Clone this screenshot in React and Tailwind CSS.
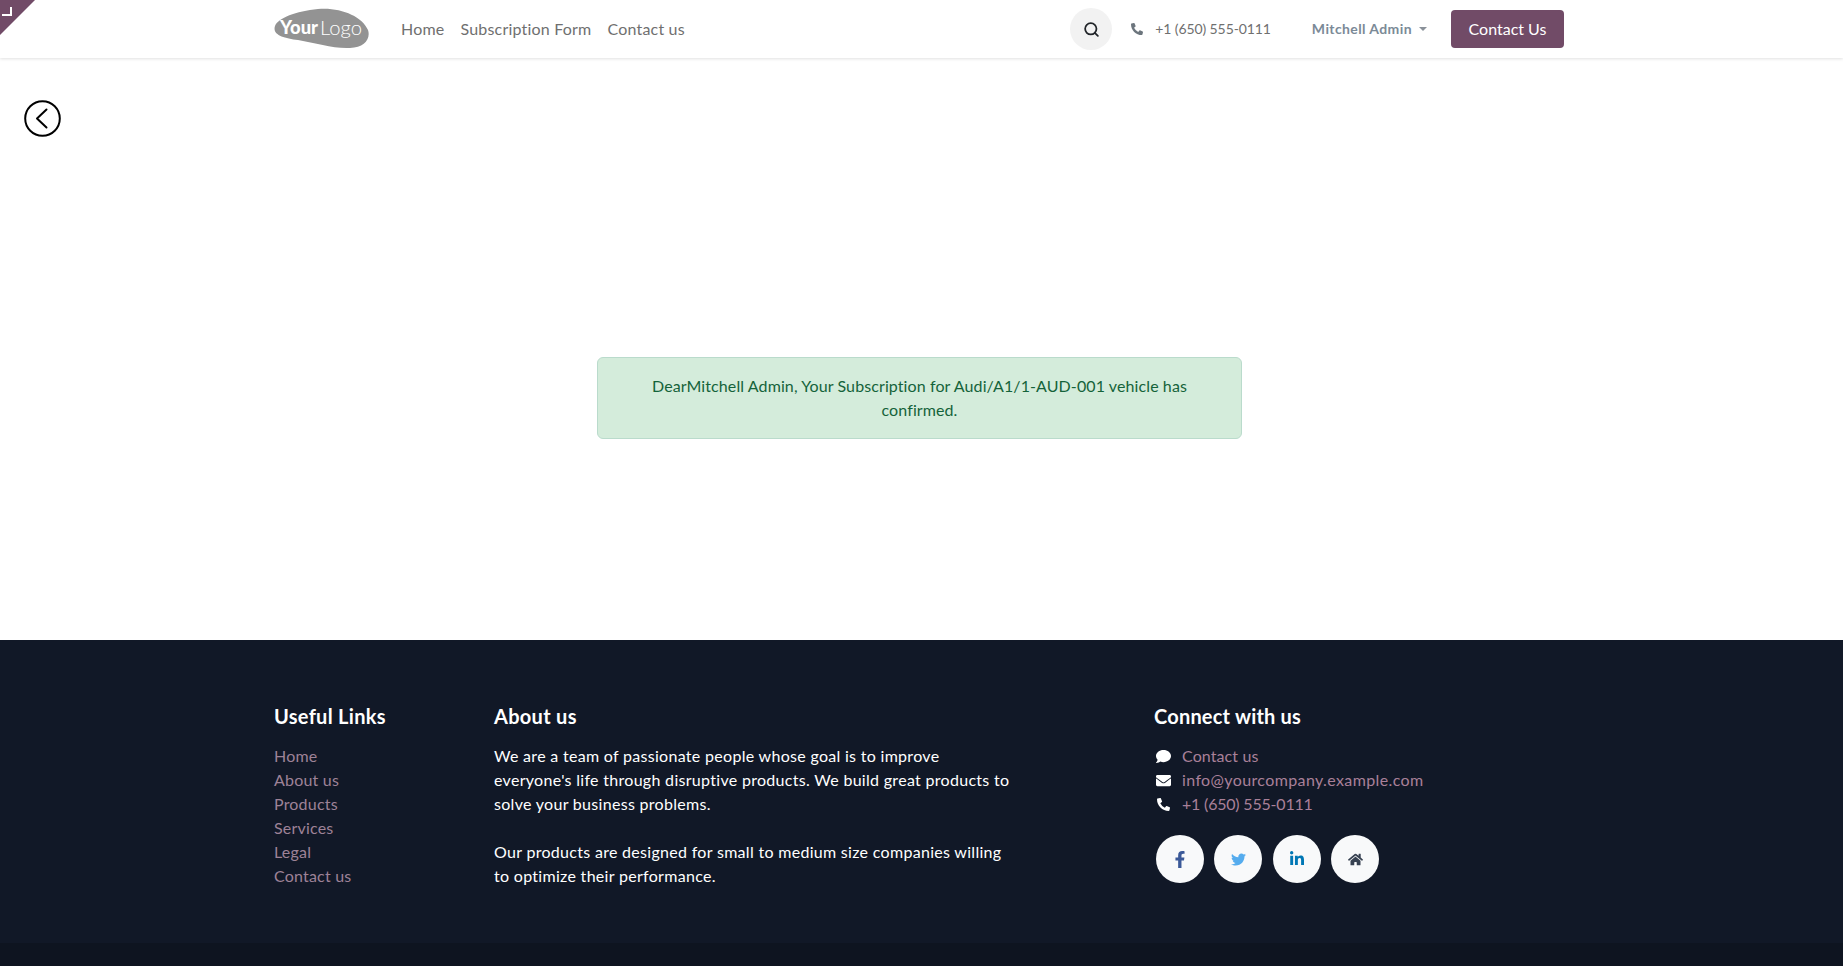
import React from 'react';
import { FaFacebookF, FaTwitter, FaLinkedinIn, FaHome, FaComment, FaEnvelope, FaPhoneAlt } from 'react-icons/fa';
import { Search } from 'lucide-react';

const usefulLinks = ['Home', 'About us', 'Products', 'Services', 'Legal', 'Contact us'];

const contacts = [
  { icon: <FaComment className="w-[17px] h-[15px]" />, label: 'Contact us', track: 'tracking-[0.1px]' },
  { icon: <FaEnvelope className="w-[17px] h-[15px]" />, label: 'info@yourcompany.example.com', track: 'tracking-[0.38px]' },
  { icon: <FaPhoneAlt className="w-[13px] h-[13px] ml-[2px]" />, label: '+1 (650) 555-0111', track: 'tracking-[-0.2px]' },
];

const socials = [
  { icon: <FaFacebookF className="w-[14px] h-[17px] text-[#3b5998]" />, key: 'fb' },
  { icon: <FaTwitter className="w-[15px] h-[15px] text-[#55acee]" />, key: 'tw' },
  { icon: <FaLinkedinIn className="w-[16px] h-[16px] text-[#0077b5]" />, key: 'li' },
  { icon: <FaHome className="w-[15px] h-[15px] text-[#374151]" />, key: 'home' },
];

function Logo() {
  return (
    <svg width="96" height="42" viewBox="0 0 96 42" className="block">
      <path
        d="M1 18 C4 10 22 3 44 1 C66 -1 88 8 94 22 C97 31 90 40 76 40 C60 41 42 35 24 32 C10 30 -2 27 1 18 Z"
        fill="#939393"
      />
      <text x="6" y="26" fontSize="18" fontWeight="900" fill="#fff" fontFamily="Lato, sans-serif" textLength="38" lengthAdjust="spacingAndGlyphs">Your</text>
      <text x="46" y="27" fontSize="20" fontWeight="300" fill="#fff" fontFamily="Lato, sans-serif" textLength="42" lengthAdjust="spacingAndGlyphs">Logo</text>
    </svg>
  );
}

export default function App() {
  return (
    <div className="relative flex flex-col h-screen overflow-hidden bg-white font-['Lato',sans-serif] text-base">
      {/* editor corner */}
      <div className="absolute left-0 top-0 w-[35px] h-[35px] bg-[#714B67] [clip-path:polygon(0_0,100%_0,0_100%)] z-20">
        <div className="absolute left-[2px] top-[7px] w-[10px] h-[9px] border-r-2 border-b-2 border-white"></div>
      </div>

      <header className="h-[58px] shrink-0 bg-white shadow-[0_1px_3px_rgba(0,0,0,0.12)] z-10">
        <div className="w-[1295px] h-full mx-auto flex items-center text-[#6b6b6b]">
          <Logo />
          <nav className="flex items-center gap-4 ml-[31px] text-[#6f6f6f] tracking-[0.2px]">
            <span>Home</span>
            <span>Subscription Form</span>
            <span>Contact us</span>
          </nav>
          <div className="flex-1"></div>
          <div className="w-[42px] h-[42px] rounded-full bg-[#f2f2f2] flex items-center justify-center text-[#212529]">
            <Search size={17} strokeWidth={2.5} />
          </div>
          <FaPhoneAlt className="w-[12px] h-[12px] ml-[19px] text-[#6c757d]" />
          <span className="ml-[12px] text-sm text-[#6f6f6f] tracking-[-0.1px]">+1 (650) 555-0111</span>
          <span className="ml-[41px] text-sm font-bold text-[#7b8a97] tracking-[0.4px]">Mitchell Admin</span>
          <span className="ml-[7px] w-0 h-0 border-x-4 border-t-4 border-x-transparent border-t-[#8a9199]"></span>
          <button className="ml-[24px] mr-[5px] w-[113px] h-[38px] bg-[#714B67] rounded text-white">Contact Us</button>
        </div>
      </header>

      <main className="flex-1">
        <div className="ml-6 mt-[42px] w-[37px] h-[37px]">
          <svg width="37" height="37" viewBox="0 0 37 37" fill="none" stroke="#000" strokeWidth="2">
            <circle cx="18.5" cy="18.5" r="17.3" />
            <path d="M22.5 9.5 L13 18.5 L22.5 27.5" strokeLinecap="round" strokeLinejoin="round" />
          </svg>
        </div>
        <div className="w-[645px] h-[82px] mt-[220px] ml-[597px] flex items-center justify-center text-center leading-6 tracking-[0.1px] rounded-md border border-[#badbcc] bg-[#d4ecdb] text-[#14633a]">
          <p>
            DearMitchell Admin, Your Subscription for Audi/A1/1-AUD-001 vehicle has
            <br />
            confirmed.
          </p>
        </div>
      </main>

      <footer className="shrink-0 bg-[#111827] text-white">
        <div className="h-[303px] w-[1295px] mx-auto pt-[64px] flex">
          <div className="w-[220px]">
            <h5 className="text-xl font-bold leading-[24px] mb-[16px] tracking-[0.3px]">Useful Links</h5>
            <ul className="leading-6 text-[#9e8297] tracking-[0.2px]">
              {usefulLinks.map((link) => (
                <li key={link}>{link}</li>
              ))}
            </ul>
          </div>
          <div className="w-[660px]">
            <h5 className="text-xl font-bold leading-[24px] mb-[16px] tracking-[0.3px]">About us</h5>
            <p className="leading-6 tracking-[0.3px]">
              We are a team of passionate people whose goal is to improve
              <br />
              everyone's life through disruptive products. We build great products to
              <br />
              solve your business problems.
            </p>
            <p className="leading-6 mt-6 tracking-[0.3px]">
              Our products are designed for small to medium size companies willing
              <br />
              to optimize their performance.
            </p>
          </div>
          <div>
            <h5 className="text-xl font-bold leading-[24px] mb-[16px] tracking-[0.2px]">Connect with us</h5>
            <ul className="leading-6">
              {contacts.map((item) => (
                <li key={item.label} className="flex items-center">
                  <span className="w-[28px] flex justify-start pl-[1px]">{item.icon}</span>
                  <span className={`text-[#a98099] ${item.track}`}>{item.label}</span>
                </li>
              ))}
            </ul>
            <div className="flex gap-[10.4px] mt-[19px] ml-[2px]">
              {socials.map((s) => (
                <div key={s.key} className="w-[48px] h-[48px] rounded-full bg-[#f8f9fa] flex items-center justify-center">
                  {s.icon}
                </div>
              ))}
            </div>
          </div>
        </div>
        <div className="h-[23px] bg-[#0e1420]"></div>
      </footer>
    </div>
  );
}
